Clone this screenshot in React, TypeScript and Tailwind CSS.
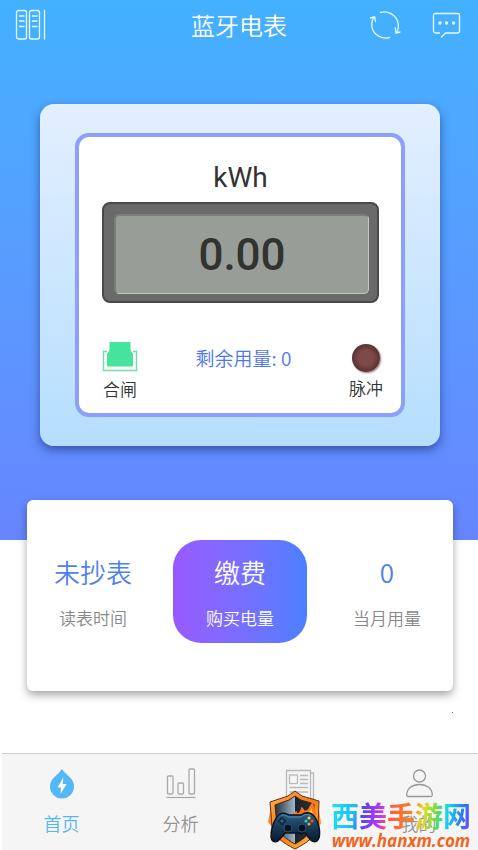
import type { ReactNode } from 'react';

function ShelvesIcon() {
  return (
    <svg width="32" height="32" viewBox="0 0 32 32" fill="none" stroke="currentColor" strokeWidth="1.3" strokeLinecap="round">
      <rect x="1.5" y="1.5" width="10" height="28.5" rx="2" />
      <rect x="14.5" y="1.5" width="10" height="28.5" rx="2" />
      <path d="M4.500 7h4.500M4.500 12h4.500M4.500 17.500h4.500M17.500 7h4.500M17.500 12h4.500M17.500 17.500h4.500M29.500 1.500v28.500" />
    </svg>
  );
}

function RefreshIcon() {
  return (
    <svg width="32" height="32" viewBox="0 0 32 32" fill="none" stroke="currentColor" strokeWidth="1.3" strokeLinecap="round" strokeLinejoin="round">
      <path d="M11.500 3.500C19 1.500 26 5.500 28.500 12C29.800 15.500 29.500 20 27.500 24" />
      <path d="M20.500 28.500C13 30.500 6 26.500 3.500 20C2.200 16 2.500 12 5 8" />
      <path d="M1.500 9L5.700 8L6.500 12.500M26.300 19L27 24L31 23" />
    </svg>
  );
}

function MessageIcon() {
  return (
    <svg width="32" height="32" viewBox="0 0 32 32" fill="none" stroke="currentColor" strokeWidth="1.3" strokeLinecap="round" strokeLinejoin="round">
      <path d="M8.500 24H4.500A2 2 0 0 1 2.500 22V6.500A2 2 0 0 1 4.500 4.500H26.500A2 2 0 0 1 28.500 6.500V22A2 2 0 0 1 26.500 24H14.500L10.500 28" />
      <g fill="currentColor" stroke="none">
        <circle cx="9" cy="14" r="1.700" />
        <circle cx="15.500" cy="14" r="1.700" />
        <circle cx="22.500" cy="14" r="1.700" />
      </g>
    </svg>
  );
}

function SwitchIcon() {
  return (
    <svg width="36" height="32" viewBox="0 0 36 32" fill="none">
      <path d="M5 11.500H1.500V30.500H34.500V11.500H31" stroke="#6fe0ad" strokeWidth="1.5" />
      <path d="M7.500 2H28.500V10L31 14V26.500H5V14L7.500 10Z" fill="#45e39b" />
    </svg>
  );
}

function DropIcon() {
  return (
    <svg width="32" height="32" viewBox="0 0 32 32">
      <path d="M16 1Q17.500 3.500 24 9.500Q28 13.500 28 18.500A12 12 0 0 1 4 18.500Q4 13.500 8 9.500Q14.500 3.500 16 1Z" fill="#54b8f6" />
      <path d="M17.300 9.500L11.500 19.500H15L14.500 26L20.500 16H16.800Z" fill="#fff" />
    </svg>
  );
}

function ChartIcon() {
  return (
    <svg width="32" height="32" viewBox="0 0 32 32" fill="none" stroke="#a9a9a9" strokeWidth="1.3">
      <rect x="2.500" y="8" width="5.500" height="18" rx="1" />
      <rect x="13" y="15" width="5.500" height="11" rx="1" />
      <rect x="24" y="1" width="5.500" height="25" rx="1" />
      <path d="M1.500 29.500H30.500" />
    </svg>
  );
}

function NewsIcon() {
  return (
    <svg width="32" height="32" viewBox="0 0 32 32" fill="none" stroke="#b9b9b9" strokeWidth="1.3">
      <path d="M2.500 31V2.500H26.500V31M26.500 5H29.500V31M2.500 31H29.500" />
      <rect x="5.500" y="7" width="8" height="8.500" />
      <path d="M16 7.500H24M16 11.500H24M16 15.500H24M5.500 19.500H24M5.500 24H24" />
    </svg>
  );
}

function PersonIcon() {
  return (
    <svg width="32" height="32" viewBox="0 0 32 32" fill="none" stroke="#999" strokeWidth="1.3" strokeLinejoin="round">
      <circle cx="16.500" cy="8" r="6" />
      <path d="M5 28.500Q3.500 28.500 3.700 26.500C4 20.500 9 16.500 16.500 16.500S29 20.500 29.300 26.500Q29.500 28.500 28 28.500Z" />
    </svg>
  );
}

function ShieldLogo() {
  return (
    <svg width="56" height="60" viewBox="0 0 56 60">
      <defs>
        <linearGradient id="rim" x1="0" y1="0" x2="1" y2="1">
          <stop offset="0" stopColor="#ffb04a" />
          <stop offset="0.5" stopColor="#f47a1c" />
          <stop offset="1" stopColor="#ffc04f" />
        </linearGradient>
        <linearGradient id="steel" x1="0" y1="0" x2="1" y2="0">
          <stop offset="0" stopColor="#21313f" />
          <stop offset="0.5" stopColor="#9fb6c6" />
          <stop offset="0.52" stopColor="#172330" />
          <stop offset="1" stopColor="#26323c" />
        </linearGradient>
        <linearGradient id="pad" x1="0" y1="0" x2="0" y2="1">
          <stop offset="0" stopColor="#2e6187" />
          <stop offset="0.45" stopColor="#193c5a" />
          <stop offset="1" stopColor="#0a1a2b" />
        </linearGradient>
      </defs>
      <path d="M3 22L1 32L5 37L3 43L12 49L50 43L54 33L52 20Z" fill="#ff8a22" />
      <path d="M28 1L35 6L52 11L51 37C49 46 40 53 28 59C16 53 6 46 5 37L3 12L21 6Z" fill="url(#rim)" stroke="#6b2a10" strokeWidth="1" />
      <path d="M28 6L34 10L47 14L46 36C44 43 37 49 28 54C19 49 11 43 10 36L8 15L22 10Z" fill="url(#steel)" stroke="#52210d" />
      <path d="M21 28C26 27 25 22 30 21C29 25 34 23 34 17C38 18 36 22 40 20C43 18 42 14 47 12C45 18 51 20 48 30Z" fill="#ff7418" />
      <path d="M28 28C33 27 35 23 37 24C40 24 43 22 45 18C45 23 47 25 45 29Z" fill="#ffd33d" />
      <path d="M13 24C17 22 19 24 22 25H34C38 22 43 22 46 25C51 30 54 41 52 48C50 53 45 53 42 48L38 43H18L13 49C9 54 4 52 4 46C4 38 8 27 13 24Z" fill="url(#pad)" stroke="#071321" strokeWidth="1.4" />
      <path d="M14 25.500C18 24 19 26 22 27H34C37 24 42 24 44 26" fill="none" stroke="#4e91b8" />
      <path d="M15 27.500V34.500M11.500 31H18.500" stroke="#071321" strokeWidth="3" />
      <path d="M15 28.500V33.500M12.500 31H17.500" stroke="#4b7892" />
      <circle cx="21" cy="38" r="4" fill="#07121d" stroke="#29536e" />
      <circle cx="35" cy="38" r="4" fill="#07121d" stroke="#29536e" />
      <circle cx="42" cy="28" r="1.600" fill="#ffd23c" />
      <circle cx="45" cy="31" r="1.600" fill="#ff4d38" />
      <circle cx="42" cy="34" r="1.600" fill="#f29c31" />
      <circle cx="39" cy="31" r="1.600" fill="#40bde0" />
    </svg>
  );
}

function Stat({ value, label }: { value: string; label: string }) {
  return (
    <div className="flex flex-1 flex-col items-center pt-3">
      <span className="text-[26px] leading-10 text-[#4f80f0]">{value}</span>
      <span className="mt-3 text-[17px] leading-7 text-[#888]">{label}</span>
    </div>
  );
}

function Tab({ icon, label, name, active }: { icon: ReactNode; label?: string; name: string; active?: boolean }) {
  return (
    <button
      type="button"
      aria-label={name}
      className={`flex flex-1 flex-col items-center pt-[14px] text-[18px] leading-7 ${active ? 'text-[#55b5f5]' : 'text-[#959595]'}`}
    >
      {icon}
      <span className="mt-[9px]">{label}</span>
    </button>
  );
}

export default function App() {
  return (
    <div className="relative flex min-h-screen flex-col bg-white font-['Noto_Sans_CJK_SC',sans-serif] font-[350]">
      <section className="bg-linear-to-b from-[#42b1ff] to-[#6685ff] pb-[94px]">
        <header className="flex h-[50px] items-center px-[15px] text-[#e8fbff]">
          <div className="flex flex-1">
            <button type="button" aria-label="电表列表"><ShelvesIcon /></button>
          </div>
          <h1 className="text-[24px] leading-9 font-[350] text-white">蓝牙电表</h1>
          <div className="flex flex-1 justify-end gap-[30px]">
            <button type="button" aria-label="刷新"><RefreshIcon /></button>
            <button type="button" aria-label="消息"><MessageIcon /></button>
          </div>
        </header>

        <div className="mt-[54px] mr-[38px] ml-10 rounded-[14px] bg-linear-to-b from-[#e3efff] to-[#b5deff] px-[35px] pt-[29px] pb-[29px] shadow-[0_4px_10px_rgba(25,45,110,0.6)]">
          <div className="rounded-[14px] border-4 border-[#8b9ffb] bg-white pt-[21px] pr-[22px] pb-3 pl-[23px]">
            <p className="text-center font-['Roboto',sans-serif] text-[28px] leading-10 font-normal text-[#333]">kWh</p>
            <div className="mt-1 rounded-[8px] border-2 border-[#484948] bg-[#696a69] pt-[10px] pr-[8px] pb-[7px] pl-[10px]">
              <div className="flex h-[80px] items-center justify-center rounded-[5px] border-t-2 border-r border-b border-l-2 border-t-[#7b7e7b] border-r-[#c4c8c4] border-b-[#c4c8c4] border-l-[#7b7e7b] bg-[#989d98] font-['Roboto',sans-serif] text-[44px] leading-none font-medium text-[#30332f]">
                0.00
              </div>
            </div>
            <div className="-mr-1 mt-[37px] flex items-start justify-between">
              <button type="button" className="flex flex-col items-center text-[17px] leading-6 text-[#333]">
                <SwitchIcon />
                <span className="mt-[5px]">合闸</span>
              </button>
              <p className="mt-1 text-[19px] leading-7 text-[#4f76f0]">剩余用量: 0</p>
              <div className="flex flex-col items-center pt-1 text-[17px] leading-6 text-[#333]">
                <span className="size-7 rounded-full bg-radial from-[#804949] from-35% to-[#3a2020] shadow-[1px_1px_2px_rgba(70,30,30,0.6)]" />
                <span className="mt-1">脉冲</span>
              </div>
            </div>
          </div>
        </div>
      </section>

      <section className="relative mr-[25px] ml-[27px] -mt-10 flex gap-[14px] rounded-md bg-white pt-10 pb-12 shadow-[0_4px_8px_rgba(0,0,0,0.35)]">
        <Stat value="未抄表" label="读表时间" />
        <button
          type="button"
          className="flex h-[103px] w-[134px] flex-col items-center rounded-[28px] bg-linear-to-r from-[#9859ff] to-[#4a7fff] pt-3 text-white"
        >
          <span className="text-[26px] leading-10">缴费</span>
          <span className="mt-3 text-[17px] leading-7">购买电量</span>
        </button>
        <Stat value="0" label="当月用量" />
      </section>

      <div className="mt-[21px] mr-[25px] size-px self-end bg-[#555]" />

      <nav className="mt-auto ml-0.5 flex h-[97px] border-t border-[#ccc] bg-[#f5f5f5]">
        <Tab icon={<DropIcon />} label="首页" name="首页" active />
        <Tab icon={<ChartIcon />} label="分析" name="分析" />
        <Tab icon={<NewsIcon />} name="资讯" />
        <Tab icon={<PersonIcon />} label="我的" name="我的" />
      </nav>

      <div className="pointer-events-none absolute right-[7px] bottom-0 flex items-end">
        <ShieldLogo />
        <div className="ml-2 flex flex-col items-center">
          <span className="bg-[linear-gradient(100deg,#18e8f0_0%,#20b9f5_18%,#5046ee_23%,#c336f0_36%,#ff5b3d_42%,#ff8020_58%,#e8dc20_65%,#68dd45_74%,#18d8e8_81%,#2a78f5_92%,#8a3cf0_100%)] bg-clip-text text-[28px] leading-[34px] font-bold text-transparent">
            西美手游网
          </span>
          <span className="font-['Open_Sans',sans-serif] text-[17px] leading-[18px] font-bold text-[#f0651f] italic">www.hanxm.com</span>
        </div>
      </div>
    </div>
  );
}
